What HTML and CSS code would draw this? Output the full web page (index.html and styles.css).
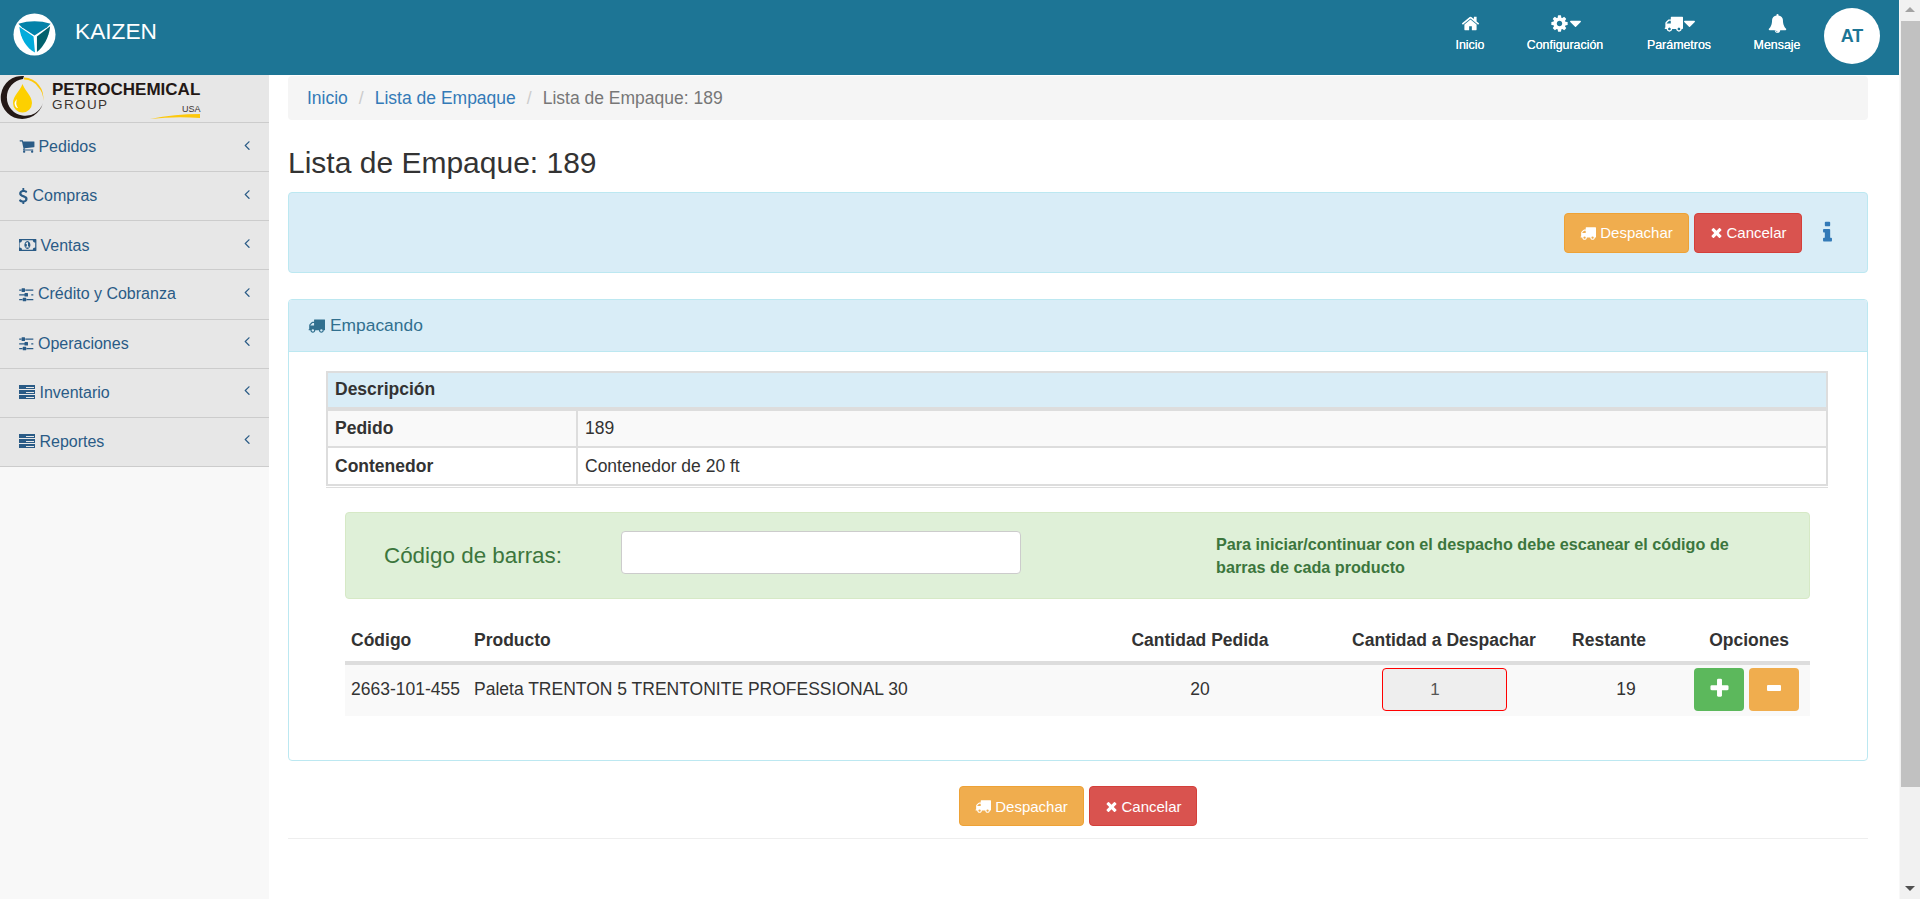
FILE: index.html
```html
<!DOCTYPE html>
<html>
<head>
<meta http-equiv="Content-Type" content="text/html; charset=utf-8"/>
<title>Lista de Empaque: 189</title>
<link rel="stylesheet" href="styles.css">
</head>
<body>

<svg class="sprite" xmlns="http://www.w3.org/2000/svg">
<symbol id="i-home" viewBox="0 0 1792 1792"><path d="M1472 992v480q0 26-19 45t-45 19h-384v-384h-256v384h-384q-26 0-45-19t-19-45v-480q0-1 .5-3t.5-3l575-474 575 474q1 2 1 6zm223-69l-62 74q-8 9-21 11h-3q-13 0-21-7l-692-577-692 577q-12 8-24 7-13-2-21-11l-62-74q-8-10-7-23.5t11-21.5l719-599q32-26 76-26t76 26l244 204v-195q0-14 9-23t23-9h192q14 0 23 9t9 23v408l219 182q10 8 11 21.5t-7 23.5z"/></symbol>
<symbol id="i-cog" viewBox="0 0 1792 1792"><path d="M1152 896q0-106-75-181t-181-75-181 75-75 181 75 181 181 75 181-75 75-181zm512-109v222q0 12-8 23t-20 13l-185 28q-19 54-39 91 35 50 107 138 10 12 10 25t-9 23q-27 37-99 108t-94 71q-12 0-26-9l-138-108q-44 23-91 38-16 136-29 186-7 28-36 28h-222q-14 0-24.5-8.5t-11.5-21.5l-28-184q-49-16-90-37l-141 107q-10 9-25 9-14 0-25-11-126-114-165-168-7-10-7-23 0-12 8-23 15-21 51-66.5t54-70.5q-27-50-41-99l-183-27q-13-2-21-12.5t-8-23.5v-222q0-12 8-23t19-13l186-28q14-46 39-92-40-57-107-138-10-12-10-24 0-10 9-23 26-36 98.5-107.5t94.5-71.5q13 0 26 10l138 107q44-23 91-38 16-136 29-186 7-28 36-28h222q14 0 24.5 8.5t11.5 21.5l28 184q49 16 90 37l142-107q9-9 24-9 13 0 25 10 129 119 165 170 7 8 7 22 0 12-8 23-15 21-51 66.5t-54 70.5q26 50 41 98l183 28q13 2 21 12.5t8 23.5z"/></symbol>
<symbol id="i-truck" viewBox="0 0 1792 1792"><path d="M640 1408q0-52-38-90t-90-38-90 38-38 90 38 90 90 38 90-38 38-90zm-384-512h384v-256h-158q-13 0-22 9l-195 195q-9 9-9 22v30zm1280 512q0-52-38-90t-90-38-90 38-38 90 38 90 90 38 90-38 38-90zm256-1088v1024q0 15-4 26.5t-13.5 18.5-16.5 11.5-23.5 6-22.5 2-25.5 0-22.5-.5q0 106-75 181t-181 75-181-75-75-181h-384q0 106-75 181t-181 75-181-75-75-181h-64q-3 0-22.5.5t-25.5 0-22.5-2-23.5-6-16.5-11.5-13.5-18.5-4-26.5q0-26 19-45t45-19v-320q0-8-.5-35t0-38 2.5-34.5 6.5-37 14-30.5 22.5-30l198-198q19-19 50.5-32t58.5-13h160v-192q0-26 19-45t45-19h1024q26 0 45 19t19 45z"/></symbol>
<symbol id="i-bell" viewBox="0 0 1792 1792"><path d="M912 1696q0-16-16-16-59 0-101.5-42.5t-42.5-101.5q0-16-16-16t-16 16q0 73 51.5 124.5t124.5 51.5q16 0 16-16zm816-288q0 52-38 90t-90 38h-448q0 106-75 181t-181 75-181-75-75-181h-448q-52 0-90-38t-38-90q50-42 91-88t85-119.5 74.5-158.5 50-206 19.5-260q0-152 117-282.5t307-158.5q-8-19-8-39 0-40 28-68t68-28 68 28 28 68q0 20-8 39 190 28 307 158.5t117 282.5q0 139 19.5 260t50 206 74.5 158.5 85 119.5 91 88z"/></symbol>
<symbol id="i-caret" viewBox="0 0 1792 1792"><path d="M1408 704q0 26-19 45l-448 448q-19 19-45 19t-45-19l-448-448q-19-19-19-45t19-45 45-19h896q26 0 45 19t19 45z"/></symbol>
<symbol id="i-cart" viewBox="0 0 1792 1792"><path d="M704 1536q0 52-38 90t-90 38-90-38-38-90 38-90 90-38 90 38 38 90zm896 0q0 52-38 90t-90 38-90-38-38-90 38-90 90-38 90 38 38 90zm128-1088v512q0 24-16.5 42.5t-40.5 21.5l-1044 122q13 60 13 70 0 16-24 64h920q26 0 45 19t19 45-19 45-45 19h-1024q-26 0-45-19t-19-45q0-11 8-31.5t16-36 21.5-40 15.5-29.5l-177-823h-204q-26 0-45-19t-19-45 19-45 45-19h256q16 0 28.5 6.5t19.5 15.5 13 24.5 8 26 5.5 29.5 4.5 26h1201q26 0 45 19t19 45z"/></symbol>
<symbol id="i-usd" viewBox="0 0 1792 1792"><path d="M1362 1185q0 153-99.5 263.5t-258.5 136.5v175q0 14-9 23t-23 9h-135q-13 0-22.5-9.5t-9.5-22.5v-175q-66-9-127.5-31t-101.5-44.5-74-48-46.5-37.5-17.5-18q-17-21-2-41l103-135q7-10 23-12 15-2 24 9l2 2q113 99 243 125 37 8 74 8 81 0 142.5-43t61.5-122q0-28-15-53t-33.5-42-58.5-37.5-66-32-80-32.5q-39-16-61.5-25t-61.5-26.5-62.5-31-56.5-35.5-53.5-42.5-43.5-49-35.5-58-21-66.5-8.5-78q0-138 98-242t255-134v-180q0-13 9.5-22.5t22.5-9.5h135q14 0 23 9t9 23v176q57 6 110.5 23t87 33.5 63.5 37.5 39 29 15 14q17 18 5 38l-81 146q-8 15-23 16-14 3-27-7-3-3-14.5-12t-39-26.5-58.5-32-74.5-26-85.5-11.5q-95 0-155 43t-60 111q0 26 8.5 48t29.5 41.5 39.5 33 56 31 60.5 27 70 27.5q53 20 81 31.5t76 35 75.5 42.5 62 50 53 63.5 31.5 76.5 13 94z"/></symbol>
<symbol id="i-money" viewBox="0 0 1920 1792"><path d="M704 1152h384v-96h-128v-448h-114l-148 137 77 80q42-37 55-57h2v288h-128v96zm512-256q0 70-21 142t-59.5 134-101.5 101-138 39-138-39-101.5-101-59.5-134-21-142 21-142 59.5-134 101.5-101 138-39 138 39 101.5 101 59.5 134 21 142zm512 256v-512q-106 0-181-75t-75-181h-1152q0 106-75 181t-181 75v512q106 0 181 75t75 181h1152q0-106 75-181t181-75zm128-832v1152q0 26-19 45t-45 19h-1792q-26 0-45-19t-19-45v-1152q0-26 19-45t45-19h1792q26 0 45 19t19 45z"/></symbol>
<symbol id="i-sliders" viewBox="0 0 1792 1792"><path d="M480 1408v128h-352v-128h352zm352-128q26 0 45 19t19 45v256q0 26-19 45t-45 19h-256q-26 0-45-19t-19-45v-256q0-26 19-45t45-19h256zm160-384v128h-864v-128h864zm-640-512v128h-224v-128h224zm1312 1024v128h-736v-128h736zm-960-1152q26 0 45 19t19 45v256q0 26-19 45t-45 19h-256q-26 0-45-19t-19-45v-256q0-26 19-45t45-19h256zm320 512q26 0 45 19t19 45v256q0 26-19 45t-45 19h-256q-26 0-45-19t-19-45v-256q0-26 19-45t45-19h256zm640 128v128h-224v-128h224zm0-512v128h-864v-128h864z"/></symbol>
<symbol id="i-server" viewBox="0 0 16 14"><path fill-rule="evenodd" d="M0 0h16v4H0zM7 2h8v1H7zM0 5h16v4H0zM7 7h8v1H7zM0 10h16v4H0zM7 12h8v1H7z"/></symbol>
<symbol id="i-angle" viewBox="0 0 1792 1792"><path d="M1203 544q0 13-10 23l-393 393 393 393q10 10 10 23t-10 23l-50 50q-10 10-23 10t-23-10l-466-466q-10-10-10-23t10-23l466-466q10-10 23-10t23 10l50 50q10 10 10 23z"/></symbol>
<symbol id="i-times" viewBox="0 0 1792 1792"><path d="M1490 1322q0 40-28 68l-136 136q-28 28-68 28t-68-28l-294-294-294 294q-28 28-68 28t-68-28l-136-136q-28-28-28-68t28-68l294-294-294-294q-28-28-28-68t28-68l136-136q28-28 68-28t68 28l294 294 294-294q28-28 68-28t68 28l136 136q28 28 28 68t-28 68l-294 294 294 294q28 28 28 68z"/></symbol>
<symbol id="i-info" viewBox="0 0 1792 1792"><path d="M1216 1344v128q0 26-19 45t-45 19h-512q-26 0-45-19t-19-45v-128q0-26 19-45t45-19h64v-384h-64q-26 0-45-19t-19-45v-128q0-26 19-45t45-19h384q26 0 45 19t19 45v576h64q26 0 45 19t19 45zm-128-1152v192q0 26-19 45t-45 19h-256q-26 0-45-19t-19-45v-192q0-26 19-45t45-19h256q26 0 45 19t19 45z"/></symbol>
<symbol id="i-plus" viewBox="0 0 1792 1792"><path d="M1600 736v192q0 40-28 68t-68 28h-416v416q0 40-28 68t-68 28h-192q-40 0-68-28t-28-68v-416h-416q-40 0-68-28t-28-68v-192q0-40 28-68t68-28h416v-416q0-40 28-68t68-28h192q40 0 68 28t28 68v416h416q40 0 68 28t28 68z"/></symbol>
</svg>

<div class="window">
  <div class="app">

    <header class="topbar">
      <div class="brand">
        <svg class="brand-logo" viewBox="0 0 44 44" xmlns="http://www.w3.org/2000/svg">
          <circle cx="22" cy="22" r="21.5" fill="#fff"/>
          <path d="M5.5 11 Q22 6 38.5 11 L35 14.5 L22 23 L9 14.5 Z" fill="#0382a9"/>
          <path d="M6.5 14 L21 24 L22.5 40.5 C14 36 7.5 26 6.5 14 Z" fill="#02acdc"/>
          <path d="M38 13.5 L24.5 24 L24.5 40 C31 34.5 37 25 38 13.5 Z" fill="#02616d"/>
        </svg>
        <span class="brand-name">KAIZEN</span>
      </div>
      <nav class="topnav">
        <a class="topnav-item nav-inicio">
          <span class="topnav-icon"><svg class="ico ico-19"><use href="#i-home"/></svg></span>
          <span>Inicio</span>
        </a>
        <a class="topnav-item nav-config">
          <span class="topnav-icon"><svg class="ico ico-19"><use href="#i-cog"/></svg><svg class="ico ico-caret"><use href="#i-caret"/></svg></span>
          <span>Configuración</span>
        </a>
        <a class="topnav-item nav-param">
          <span class="topnav-icon"><svg class="ico ico-19"><use href="#i-truck"/></svg><svg class="ico ico-caret"><use href="#i-caret"/></svg></span>
          <span>Parámetros</span>
        </a>
        <a class="topnav-item nav-msg">
          <span class="topnav-icon"><svg class="ico ico-19"><use href="#i-bell"/></svg></span>
          <span>Mensaje</span>
        </a>
        <span class="avatar">AT</span>
      </nav>
    </header>

    <div class="layout">
      <aside class="sidebar">
        <div class="company">
          <svg class="company-logo" viewBox="0 0 202 47" xmlns="http://www.w3.org/2000/svg">
            <path d="M24 1 A21.5 21.5 0 1 0 43 28 A18.5 18.5 0 1 1 23 4 Z" fill="#231815"/>
            <path d="M24 2.5 A20 20 0 0 1 43 26 A17 17 0 0 0 38 12 A17 17 0 0 0 24 4.5 Z" fill="#fdc80c"/>
            <path d="M22.5 9 C25 16 32 21 32 28 A9.5 9.5 0 0 1 13 28 C13 21 20 16 22.5 9 Z" fill="#fdd000"/>
            <path d="M17 24 Q15 29 18 33 Q15 33 14.5 28 Q15 26 17 24 Z" fill="#fff"/>
            <text x="52" y="19.5" class="logo-main">PETROCHEMICAL</text>
            <text x="52" y="34" class="logo-sub">GROUP</text>
            <text x="182" y="37" class="logo-usa">USA</text>
            <path d="M150 44 Q175 39 200 39 L200 43 Q175 41 150 44 Z" fill="#fdc80c"/>
          </svg>
        </div>
        <ul class="menu">
          <li class="menu-item"><span class="menu-label"><svg class="ico ico-cart"><use href="#i-cart"/></svg> Pedidos</span><svg class="ico menu-arrow"><use href="#i-angle"/></svg></li>
          <li class="menu-item"><span class="menu-label"><svg class="ico ico-usd"><use href="#i-usd"/></svg> Compras</span><svg class="ico menu-arrow"><use href="#i-angle"/></svg></li>
          <li class="menu-item"><span class="menu-label"><svg class="ico ico-money"><use href="#i-money"/></svg> Ventas</span><svg class="ico menu-arrow"><use href="#i-angle"/></svg></li>
          <li class="menu-item"><span class="menu-label"><svg class="ico ico-sliders"><use href="#i-sliders"/></svg> Crédito y Cobranza</span><svg class="ico menu-arrow"><use href="#i-angle"/></svg></li>
          <li class="menu-item"><span class="menu-label"><svg class="ico ico-sliders"><use href="#i-sliders"/></svg> Operaciones</span><svg class="ico menu-arrow"><use href="#i-angle"/></svg></li>
          <li class="menu-item"><span class="menu-label"><svg class="ico ico-server"><use href="#i-server"/></svg> Inventario</span><svg class="ico menu-arrow"><use href="#i-angle"/></svg></li>
          <li class="menu-item"><span class="menu-label"><svg class="ico ico-server"><use href="#i-server"/></svg> Reportes</span><svg class="ico menu-arrow"><use href="#i-angle"/></svg></li>
        </ul>
      </aside>

      <main class="main">
        <ol class="breadcrumb">
          <li><a>Inicio</a></li>
          <li><a>Lista de Empaque</a></li>
          <li class="active">Lista de Empaque: 189</li>
        </ol>

        <h2 class="title">Lista de Empaque: 189</h2>

        <div class="actions-bar">
          <a class="btn btn-warning"><svg class="ico ico-16"><use href="#i-truck"/></svg> Despachar</a>
          <a class="btn btn-danger"><svg class="ico ico-times"><use href="#i-times"/></svg> Cancelar</a>
          <svg class="ico info-ico"><use href="#i-info"/></svg>
        </div>

        <section class="panel">
          <div class="panel-heading"><svg class="ico ico-17"><use href="#i-truck"/></svg> Empacando</div>
          <div class="panel-body">
            <div class="desc-wrap">
              <table class="desc-table">
                <tr class="desc-head"><th colspan="2">Descripción</th></tr>
                <tr class="striped"><th class="desc-key">Pedido</th><td>189</td></tr>
                <tr><th class="desc-key">Contenedor</th><td>Contenedor de 20 ft</td></tr>
              </table>
            </div>

            <div class="scan-box">
              <label class="scan-label">Código de barras:</label>
              <input class="scan-input" type="text">
              <p class="scan-hint">Para iniciar/continuar con el despacho debe escanear el código de barras de cada producto</p>
            </div>

            <table class="items-table">
              <colgroup><col class="c1"><col class="c2"><col class="c3"><col class="c4"><col class="c5"><col class="c6"></colgroup>
              <thead>
                <tr><th>Código</th><th>Producto</th><th class="center">Cantidad Pedida</th><th class="center">Cantidad a Despachar</th><th class="center th-rest">Restante</th><th class="center">Opciones</th></tr>
              </thead>
              <tbody>
                <tr>
                  <td>2663-101-455</td>
                  <td>Paleta TRENTON 5 TRENTONITE PROFESSIONAL 30</td>
                  <td class="center">20</td>
                  <td class="center"><input class="qty" type="text" value="1" disabled></td>
                  <td class="center">19</td>
                  <td class="opts">
                    <a class="btn-sq btn-success"><svg class="ico ico-plus"><use href="#i-plus"/></svg></a>
                    <a class="btn-sq btn-warning"><span class="minus"></span></a>
                  </td>
                </tr>
              </tbody>
            </table>
          </div>
        </section>

        <div class="footer-actions">
          <a class="btn btn-warning"><svg class="ico ico-16"><use href="#i-truck"/></svg> Despachar</a>
          <a class="btn btn-danger"><svg class="ico ico-times"><use href="#i-times"/></svg> Cancelar</a>
        </div>
        <hr class="rule">
      </main>
    </div>
  </div>

  <div class="scrollbar">
    <span class="scroll-up"></span>
    <span class="scroll-thumb"></span>
    <span class="scroll-down"></span>
  </div>
</div>

</body>
</html>
```

FILE: styles.css
```css
* {
   box-sizing: border-box;
}

html, body {
   height: 100%;
   margin: 0;
   overflow: hidden;
}

body {
   font-family: "Liberation Sans", Arial, sans-serif;
   font-size: 17px;
   color: #333;
   background-color: #fff;
}

.sprite {
   display: none;
}

.ico {
   fill: currentColor;
   vertical-align: -2px;
}

.ico-16 { width: 16px; height: 16px; }
.ico-17 { width: 17px; height: 17px; }
.ico-19 { width: 19px; height: 19px; }
.ico-times { width: 15px; height: 15px; margin-right: -2px; }

.window {
   display: flex;
   height: 100%;
}

.app {
   flex: 1;
   min-width: 0;
   display: flex;
   flex-direction: column;
}

/* top bar */
.topbar {
   height: 75px;
   flex: none;
   display: flex;
   justify-content: space-between;
   align-items: flex-start;
   background-color: #1d7595;
   color: #fff;
}

.brand {
   display: flex;
   align-items: center;
   height: 69px;
   padding-left: 13px;
}

.brand-logo {
   width: 43px;
   height: 43px;
}

.brand-name {
   margin-left: 19px;
   margin-top: -7px;
   font-size: 22.7px;
}

.topnav {
   display: flex;
   align-items: flex-start;
   padding-right: 19px;
}

.topnav-item {
   display: flex;
   flex-direction: column;
   align-items: center;
   padding-top: 14px;
   font-size: 12.4px;
   text-shadow: 0 0 .4px #fff;
}

.topnav-icon {
   display: flex;
   align-items: center;
   height: 19px;
   margin-bottom: 5px;
}

.ico-caret {
   width: 19px;
   height: 19px;
   margin-left: -3px;
   margin-right: -4px;
}

.nav-inicio { width: 40px; margin-right: 35px; }
.nav-config { width: 80px; margin-right: 41px; }
.nav-param  { width: 66px; margin-right: 40px; }
.nav-msg    { width: 50px; margin-right: 22px; }

.avatar {
   width: 56px;
   height: 56px;
   margin-top: 8px;
   border-radius: 50%;
   background-color: #fff;
   color: #1d7595;
   font-size: 18px;
   font-weight: bold;
   line-height: 56px;
   text-align: center;
}

/* sidebar */
.layout {
   flex: 1;
   display: flex;
   min-height: 0;
}

.sidebar {
   width: 269px;
   flex: none;
   background-color: #f8f8f8;
}

.company {
   height: 47px;
   background-color: #e7e7e7;
}

.company-logo {
   display: block;
   width: 202px;
   height: 47px;
}

.logo-main {
   font-size: 17px;
   font-weight: bold;
   fill: #231815;
}

.logo-sub {
   font-size: 13.5px;
   letter-spacing: 1.4px;
   fill: #3a3330;
}

.logo-usa {
   font-size: 9px;
   fill: #3a3330;
}

.menu {
   list-style: none;
   margin: 0;
   padding: 0;
}

.menu-item {
   display: flex;
   justify-content: space-between;
   align-items: center;
   height: 49.15px;
   padding: 0 16px 0 19px;
   background-color: #e7e7e7;
   border-top: 1px solid #ccc;
   color: #2a5b86;
   font-size: 16px;
}

.menu-item:last-child {
   border-bottom: 1px solid #ccc;
   height: 50px;
}

.ico-cart { width: 16px; height: 16px; margin-right: -1px; }
.ico-usd { width: 16.5px; height: 16.5px; margin: 0 -3.5px 0 -4px; vertical-align: -3px; }
.ico-money { width: 18px; height: 18px; margin-right: -1px; vertical-align: -3px; }
.ico-sliders { width: 16.5px; height: 16.5px; margin: 0 -1px 0 -1px; vertical-align: -3px; }
.ico-server { width: 16px; height: 14px; vertical-align: -1px; }

.menu-arrow {
   width: 16px;
   height: 16px;
   margin-top: -5px;
   margin-right: -1.5px;
}

/* main column */
.main {
   flex: 1;
   min-width: 0;
   display: flex;
   flex-direction: column;
   padding: 1px 31px 0 19px;
}

.breadcrumb {
   display: flex;
   align-items: center;
   height: 44px;
   margin: 0;
   padding: 0 19px;
   list-style: none;
   background-color: #f5f5f5;
   border-radius: 4px;
   font-size: 17.5px;
   color: #777;
}

.breadcrumb a {
   color: #337ab7;
}

.breadcrumb li + li::before {
   content: "/";
   padding: 0 11px;
   color: #ccc;
}

.title {
   margin: 26px 0 13px;
   font-size: 30px;
   font-weight: normal;
   line-height: 33px;
   color: #333;
}

.actions-bar {
   display: flex;
   justify-content: flex-end;
   align-items: center;
   height: 81px;
   padding-right: 27px;
   background-color: #d9edf7;
   border: 1px solid #bce8f1;
   border-radius: 4px;
}

.btn {
   display: inline-flex;
   align-items: center;
   justify-content: center;
   gap: 4px;
   height: 40px;
   border: 1px solid transparent;
   border-radius: 4px;
   color: #fff;
   font-size: 15px;
}

.btn-warning {
   background-color: #f0ad4e;
   border-color: #eea236;
}

.btn-danger {
   background-color: #d9534f;
   border-color: #d43f3a;
}

.btn-success {
   background-color: #5cb85c;
   border-color: #4cae4c;
}

.btn.btn-warning { width: 125px; }
.btn.btn-danger { width: 108px; margin-left: 5px; }

.info-ico {
   width: 25px;
   height: 25px;
   margin-left: 13px;
   color: #337ab7;
}

/* panel */
.panel {
   margin-top: 26px;
   border: 1px solid #bce8f1;
   border-radius: 4px;
}

.panel-heading {
   height: 52px;
   padding: 0 19px;
   display: flex;
   align-items: center;
   gap: 5px;
   background-color: #d9edf7;
   border-bottom: 1px solid #bce8f1;
   border-radius: 3px 3px 0 0;
   color: #31708f;
   font-size: 17.4px;
}

.panel-body {
   padding: 19px 39px 44px 37px;
}

.desc-wrap {
   padding-bottom: 1px;
   border-bottom: 1px solid #ddd;
}

.desc-table {
   width: 100%;
   border-collapse: collapse;
   border: 2px solid #ddd;
   font-size: 17.5px;
}

.desc-table th,
.desc-table td {
   height: 38px;
   padding: 0 7px;
   border: 2px solid #ddd;
   text-align: left;
}

.desc-table .desc-head th {
   height: 37px;
   padding-bottom: 1px;
   background-color: #d9edf7;
   border-bottom-width: 4px;
}

.desc-key {
   width: 250px;
}

.striped {
   background-color: #f9f9f9;
}

/* barcode box */
.scan-box {
   display: flex;
   align-items: center;
   height: 87px;
   margin: 24px 18px 24px 19px;
   padding-left: 38px;
   background-color: #dff0d8;
   border: 1px solid #d6e9c6;
   border-radius: 4px;
   color: #3c763d;
}

.scan-label {
   width: 237px;
   flex: none;
   font-size: 22.4px;
}

.scan-input {
   width: 400px;
   height: 43px;
   flex: none;
   margin-top: -6px;
   padding: 6px 12px;
   background-color: #fff;
   border: 1px solid #ccc;
   border-radius: 4px;
}

.scan-hint {
   width: 530px;
   margin: 0 0 0 195px;
   font-size: 16.2px;
   font-weight: bold;
   line-height: 23px;
}

/* items */
.items-table {
   width: 1465px;
   margin-left: 19px;
   border-collapse: collapse;
   table-layout: fixed;
   font-size: 17.5px;
}

.c1 { width: 123px; }
.c2 { width: 608px; }
.c3 { width: 248px; }
.c4 { width: 240px; }
.c5 { width: 124px; }
.c6 { width: 122px; }

.items-table th {
   height: 40px;
   padding: 0 6px 3px;
   border-bottom: 4px solid #ddd;
   text-align: left;
}

.items-table th.th-rest {
   padding-right: 40px;
}

.items-table td {
   height: 53px;
   padding: 0 6px 2px;
   background-color: #f9f9f9;
   white-space: nowrap;
}

.items-table .center {
   text-align: center;
}

.qty {
   width: 125px;
   height: 43px;
   padding: 0 18px 0 0;
   background-color: #eee;
   border: 1px solid #f00;
   border-radius: 4px;
   color: #555;
   font-family: inherit;
   font-size: 17px;
   text-align: center;
   vertical-align: middle;
   opacity: 1;
}

.items-table td.opts {
   padding: 0 0 2px 6px;
}

.opts {
   font-size: 0;
}

.btn-sq {
   display: inline-flex;
   align-items: center;
   justify-content: center;
   width: 50px;
   height: 43px;
   margin-right: 5px;
   border: 1px solid transparent;
   border-radius: 4px;
   color: #fff;
   vertical-align: middle;
}

.ico-plus {
   width: 23px;
   height: 23px;
   margin-top: -2px;
}

.minus {
   width: 14px;
   height: 6px;
   margin-top: -4px;
   background-color: #fff;
   border-radius: 1px;
}

.footer-actions {
   display: flex;
   justify-content: center;
   margin-top: 25px;
}

.rule {
   width: 100%;
   height: 0;
   margin: 12px 0 0;
   border: 0;
   border-top: 1px solid #eee;
}

/* page scrollbar */
.scrollbar {
   width: 21px;
   flex: none;
   display: flex;
   flex-direction: column;
   align-items: flex-end;
   background-color: #f1f1f1;
   border-left: 1px solid #f8f8f8;
}

.scroll-up,
.scroll-down {
   height: 21px;
   width: 100%;
   flex: none;
   position: relative;
}

.scroll-up::after,
.scroll-down::after {
   content: "";
   position: absolute;
   left: 5px;
   top: 7px;
   border-left: 5px solid transparent;
   border-right: 5px solid transparent;
}

.scroll-up::after {
   border-bottom: 5px solid #a3a3a3;
}

.scroll-down::after {
   top: 8px;
   border-top: 5px solid #505050;
}

.scroll-thumb {
   width: 19px;
   height: 766px;
   background-color: #c1c1c1;
}

.scroll-down {
   margin-top: auto;
}
```
